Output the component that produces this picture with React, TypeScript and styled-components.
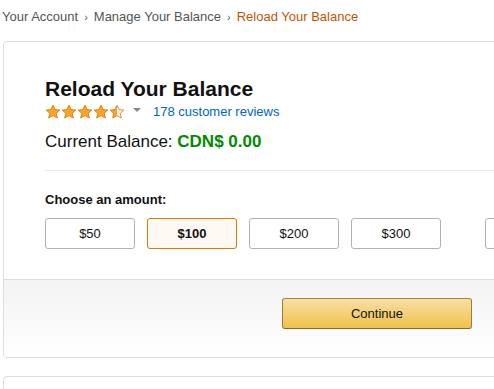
import styled, { createGlobalStyle } from "styled-components";

const GlobalStyle = createGlobalStyle`
  html, body {
    margin: 0;
    padding: 0;
    background: #fff;
    overflow: hidden;
  }
  body {
    font-family: Arial, "Liberation Sans", sans-serif;
    color: #111;
  }
`;

const Page = styled.div`
  width: 494px;
  height: 389px;
  overflow: hidden;
  padding-left: 3px;
  box-sizing: border-box;
`;

const Breadcrumb = styled.div`
  display: flex;
  align-items: center;
  gap: 6px;
  height: 33px;
  margin-left: -1px;
  font-size: 13px;
  color: #555;
  white-space: nowrap;
`;

const Crumb = styled.span<{ $active?: boolean }>`
  color: ${(p) => (p.$active ? "#c45500" : "#555")};
`;

const Sep = styled.span`
  font-size: 11px;
  color: #555;
`;

const Card = styled.div`
  margin-top: 8px;
  width: 540px;
  border: 1px solid #ddd;
  border-radius: 4px;
  overflow: hidden;
`;

const Body = styled.div`
  padding: 34px 0 30px 41px;
`;

const Title = styled.h1`
  margin: 0;
  font-size: 21px;
  line-height: 26px;
  font-weight: 700;
  color: #111;
`;

const RatingRow = styled.div`
  display: flex;
  align-items: center;
  height: 19px;
`;

const Stars = styled.div`
  display: flex;
`;

const Caret = styled.span`
  width: 0;
  height: 0;
  border-left: 4px solid transparent;
  border-right: 4px solid transparent;
  border-top: 4px solid #888;
  margin: 0 12px 0 8px;
  position: relative;
  top: -2px;
`;

const ReviewLink = styled.a`
  font-size: 13px;
  color: #0066c0;
  text-decoration: none;
`;

const BalanceLine = styled.div`
  margin-top: 9px;
  font-size: 17px;
  line-height: 24px;
  color: #111;
`;

const Amount = styled.span`
  font-weight: 700;
  color: #008a00;
`;

const Divider = styled.hr`
  border: 0;
  border-top: 1px solid #e7e7e7;
  margin: 16px 0 0;
`;

const Label = styled.div`
  margin-top: 20px;
  font-size: 13px;
  line-height: 17px;
  font-weight: 700;
  color: #111;
`;

const Amounts = styled.div`
  display: flex;
  gap: 12px;
  margin-top: 10px;
`;

const AmountButton = styled.button<{ $selected?: boolean; $gap?: boolean }>`
  width: 90px;
  height: 31px;
  box-sizing: border-box;
  border-radius: 3px;
  border: 1px solid ${(p) => (p.$selected ? "#e77600" : "#adb1b8")};
  background: ${(p) => (p.$selected ? "#fef8f2" : "#fff")};
  font-family: Arial, "Liberation Sans", sans-serif;
  font-size: 13px;
  font-weight: ${(p) => (p.$selected ? 700 : 400)};
  color: #111;
  padding: 0;
  margin-left: ${(p) => (p.$gap ? "32px" : "0")};
  flex-shrink: 0;
`;

const Footer = styled.div`
  border-top: 1px solid #ddd;
  background: linear-gradient(to bottom, #f3f3f3, #fff);
  height: 78px;
  box-sizing: border-box;
  padding-top: 18px;
  padding-left: 278px;
`;

const ContinueButton = styled.button`
  width: 190px;
  height: 31px;
  box-sizing: border-box;
  border: 1px solid;
  border-color: #a88734 #9c7e31 #846a29;
  border-radius: 3px;
  background: linear-gradient(to bottom, #f7dfa5, #f0c14b);
  font-family: Arial, "Liberation Sans", sans-serif;
  font-size: 13px;
  color: #111;
`;

const NextCard = styled.div`
  margin-top: 18px;
  width: 540px;
  height: 40px;
  border: 1px solid #ddd;
  border-radius: 4px;
`;

const Star = ({ fill }: { fill: number }) => {
  const id = `half-${fill}`;
  return (
    <svg width="16" height="16" viewBox="0 0 16 16">
      <defs>
        <linearGradient id={id} x1="0" x2="1" y1="0" y2="0">
          <stop offset={fill} stopColor="#ffa41c" />
          <stop offset={fill} stopColor="#fff" />
        </linearGradient>
      </defs>
      <path
        d="M8 1.2 L10.1 5.6 L14.8 6.1 L11.3 9.3 L12.3 14 L8 11.6 L3.7 14 L4.7 9.3 L1.2 6.1 L5.9 5.6 Z"
        fill={`url(#${id})`}
        stroke="#de7921"
        strokeWidth="0.9"
        strokeLinejoin="round"
      />
    </svg>
  );
};

export default function App() {
  const values = ["$50", "$100", "$200", "$300", "$500"];
  return (
    <Page>
      <GlobalStyle />
      <Breadcrumb>
        <Crumb>Your Account</Crumb>
        <Sep>›</Sep>
        <Crumb>Manage Your Balance</Crumb>
        <Sep>›</Sep>
        <Crumb $active>Reload Your Balance</Crumb>
      </Breadcrumb>
      <Card>
        <Body>
          <Title>Reload Your Balance</Title>
          <RatingRow>
            <Stars>
              {[1, 1, 1, 1, 0.5].map((f, i) => (
                <Star key={i} fill={f} />
              ))}
            </Stars>
            <Caret />
            <ReviewLink href="#">178 customer reviews</ReviewLink>
          </RatingRow>
          <BalanceLine>
            Current Balance: <Amount>CDN$ 0.00</Amount>
          </BalanceLine>
          <Divider />
          <Label>Choose an amount:</Label>
          <Amounts>
            {values.map((v, i) => (
              <AmountButton key={v} $selected={i === 1} $gap={i === 4}>
                {v}
              </AmountButton>
            ))}
          </Amounts>
        </Body>
        <Footer>
          <ContinueButton>Continue</ContinueButton>
        </Footer>
      </Card>
      <NextCard />
    </Page>
  );
}
